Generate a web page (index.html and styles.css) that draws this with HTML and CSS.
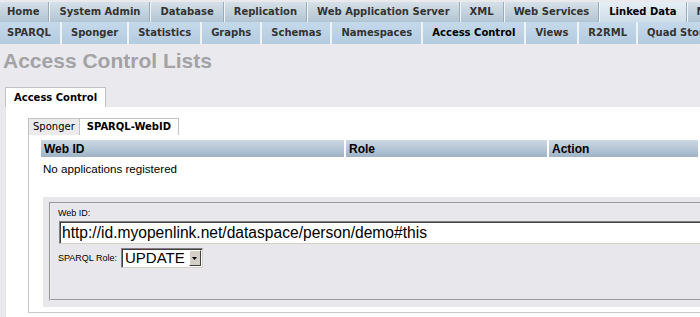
FILE: index.html
```html
<!DOCTYPE html>
<html lang="en">
<head>
  <meta charset="UTF-8">
  <title>Access Control Lists</title>
  <link rel="stylesheet" href="styles.css">
</head>
<body>
  <!-- main navigation -->
  <div class="nav nav-main">
    <a class="nav-tab">Home</a>
    <a class="nav-tab">System Admin</a>
    <a class="nav-tab">Database</a>
    <a class="nav-tab">Replication</a>
    <a class="nav-tab">Web Application Server</a>
    <a class="nav-tab">XML</a>
    <a class="nav-tab">Web Services</a>
    <a class="nav-tab active">Linked Data</a>
    <a class="nav-tab">NEWS</a>
  </div>
  <div class="nav nav-sub">
    <a class="nav-tab">SPARQL</a>
    <a class="nav-tab">Sponger</a>
    <a class="nav-tab">Statistics</a>
    <a class="nav-tab">Graphs</a>
    <a class="nav-tab">Schemas</a>
    <a class="nav-tab">Namespaces</a>
    <a class="nav-tab active">Access Control</a>
    <a class="nav-tab">Views</a>
    <a class="nav-tab">R2RML</a>
    <a class="nav-tab">Quad Store Upload</a>
  </div>

  <h1 class="page-title">Access Control Lists</h1>

  <div class="tabs outer-tabs">
    <span class="tab active">Access Control</span>
  </div>
  <div class="panel">
    <div class="tabs inner-tabs">
      <span class="tab">Sponger</span>
      <span class="tab active">SPARQL-WebID</span>
    </div>
    <div class="inner-panel">
      <table class="listing">
        <tr>
          <th class="col-webid">Web ID</th>
          <th class="col-role">Role</th>
          <th>Action</th>
        </tr>
        <tr>
          <td colspan="3">No applications registered</td>
        </tr>
      </table>

      <div class="form-box">
        <fieldset>
          <label class="small-label">Web ID:</label>
          <input class="webid-input" type="text" value="http://id.myopenlink.net/dataspace/person/demo#this">
          <div class="role-row">
            <label class="small-label">SPARQL Role:</label>
            <div class="fake-select">
              <span class="fake-select-value">UPDATE</span>
              <span class="fake-select-btn">
                <svg width="5" height="3" viewBox="0 0 5 3"><path d="M0 0h5L2.5 3z" fill="#000"/></svg>
              </span>
            </div>
          </div>
        </fieldset>
      </div>
    </div>
  </div>
</body>
</html>
```

FILE: styles.css
```css
body {
  margin: 0;
  background: #eae9ee;
  font-family: 'Liberation Sans', Arial, sans-serif;
  overflow: hidden;
}

/* top navigation */
.nav {
  display: flex;
  white-space: nowrap;
  overflow: hidden;
  font-family: 'DejaVu Sans', Verdana, sans-serif;
  font-weight: bold;
  font-size: 10px;
}

.nav-main {
  padding-top: 2px;
  height: 20px;
}

.nav-main .nav-tab {
  background: linear-gradient(to bottom, #d6e0e8, #b2c5d3);
  border-left: 1px solid #f2f5f8;
  border-right: 1px solid #98acbc;
  padding: 0 9px;
  line-height: 20px;
  color: #333;
}

.nav-main .nav-tab:first-child {
  border-left: none;
  padding-left: 7px;
}

.nav-main .nav-tab.active {
  background: linear-gradient(to bottom, #e6eef5, #cfdeea);
  color: #000;
}

.nav-sub {
  height: 22px;
}

.nav-sub .nav-tab {
  background: linear-gradient(to bottom, #c5d9ea, #b3cbe0);
  border-right: 2px solid #f0f3f6;
  padding: 0 9px;
  line-height: 22px;
  color: #333;
}

.nav-sub .nav-tab:first-child {
  padding-left: 7px;
}

.nav-sub .nav-tab.active {
  color: #000;
}

.page-title {
  margin: 0;
  padding: 5px 3px 0;
  height: 38px;
  font-size: 21px;
  font-weight: bold;
  color: #a3a3a5;
}

/* tabs */
.tabs {
  display: flex;
  font-family: 'DejaVu Sans', Verdana, sans-serif;
  font-size: 10px;
}

.tab {
  border: 1px solid #c2c2c2;
  border-bottom: none;
  padding: 0 6px;
}

.outer-tabs {
  margin-left: 5px;
}

.outer-tabs .tab {
  background: #fff;
  font-weight: bold;
  line-height: 19px;
  padding: 0 8px;
}

.panel {
  margin-left: 5px;
  background: #fff;
  border-left: 1px solid #e4e4e4;
  padding: 11px 0 4px 22px;
  height: 196px;
}

.inner-tabs .tab {
  line-height: 16px;
  padding: 0 4px;
  background: #ebebeb;
}

.inner-tabs .tab.active {
  background: #fff;
  font-weight: bold;
  border-left: none;
  padding: 0 7px 0 7px;
}

.inner-panel {
  border-left: 1px solid #c8c8c8;
  border-bottom: 1px solid #c8c8c8;
  padding: 5px 0 5px 12px;
}

/* listing table */
.listing {
  width: 100%;
  border-collapse: collapse;
  font-size: 12px;
}

.listing th {
  text-align: left;
  background: linear-gradient(to bottom, #ccd9e4, #9fb3c6);
  border-right: 2px solid #fff;
  padding: 0 3px;
  height: 17px;
  font-weight: bold;
}

.col-webid {
  width: 297px;
}

.col-role {
  width: 195px;
}

.listing td {
  padding: 4px 2px 3px;
  height: 14px;
  font-size: 11.6px;
}

/* form */
.form-box {
  margin: 19px 0 0 2px;
  background: #e8e8ec;
  padding: 5px 0 6px 6px;
}

fieldset {
  box-sizing: border-box;
  margin: 0;
  border: 2px groove #ececec;
  border-right: none;
  padding: 4px 0 0 7px;
  height: 99px;
}

.small-label {
  display: block;
  font-size: 9px;
  color: #000;
}

.webid-input {
  display: block;
  box-sizing: border-box;
  width: 100%;
  height: 23px;
  margin: 3px 0 4px 1px;
  padding: 0 2px;
  border: 1px solid #808080;
  border-right-color: #d4d0c8;
  border-bottom-color: #d4d0c8;
  box-shadow: inset 1px 1px 0 #404040;
  font-family: 'Liberation Sans', Arial, sans-serif;
  font-size: 15.6px;
  background: #fff;
}

.role-row {
  display: flex;
  align-items: center;
  gap: 4px;
}

.role-row .small-label {
  display: inline;
}

.fake-select {
  display: flex;
  align-items: stretch;
  height: 20px;
  box-sizing: border-box;
  border: 1px solid #808080;
  border-right-color: #d4d0c8;
  border-bottom-color: #d4d0c8;
  box-shadow: inset 1px 1px 0 #404040;
  background: #fff;
}

.fake-select-value {
  font-size: 15px;
  line-height: 18px;
  padding: 0 4px 0 3px;
}

.fake-select-btn {
  width: 10px;
  margin: 1px 1px 1px 0;
  background: #d4d0c8;
  border: 1px solid #fff;
  border-right-color: #404040;
  border-bottom-color: #404040;
  display: flex;
  align-items: center;
  justify-content: center;
}
```
